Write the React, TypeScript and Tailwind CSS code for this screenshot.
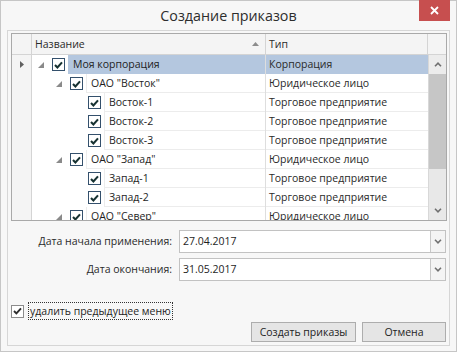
import React from "react";

type Row = { level: number; name: string; type: string; selected?: boolean };

const rows: Row[] = [
  { level: 1, name: "Моя корпорация", type: "Корпорация", selected: true },
  { level: 2, name: 'ОАО "Восток"', type: "Юридическое лицо" },
  { level: 3, name: "Восток-1", type: "Торговое предприятие" },
  { level: 3, name: "Восток-2", type: "Торговое предприятие" },
  { level: 3, name: "Восток-3", type: "Торговое предприятие" },
  { level: 2, name: 'ОАО "Запад"', type: "Юридическое лицо" },
  { level: 3, name: "Запад-1", type: "Торговое предприятие" },
  { level: 3, name: "Запад-2", type: "Торговое предприятие" },
  { level: 2, name: 'ОАО "Север"', type: "Юридическое лицо" },
];

// tree checkbox, dark slate border with a heavy tick
function TreeCheck() {
  return (
    <div className="w-[13px] h-[13px] border border-[#34506c] bg-white flex items-center justify-center">
      <svg width="9" height="8" viewBox="0 0 9 8">
        <path d="M1 4 L3.4 6.4 L8 1.4" fill="none" stroke="#173232" strokeWidth="2.1" />
      </svg>
    </div>
  );
}

function Expanded() {
  return (
    <svg width="6" height="6" viewBox="0 0 6 6">
      <path d="M6 0 L6 6 L0 6 Z" fill="#8a8a8a" />
    </svg>
  );
}

function Chevron({ up }: { up?: boolean }) {
  return (
    <svg width="8" height="5" viewBox="0 0 8 5">
      <path d={up ? "M1 4.2 L4 1.2 L7 4.2" : "M1 0.8 L4 3.8 L7 0.8"} fill="none" stroke="#707070" strokeWidth="1.6" />
    </svg>
  );
}

function DateField({ label, value }: { label: string; value: string }) {
  return (
    <div className="flex items-center">
      <div className="w-[164px] text-right text-[#2a2a2a]">{label}</div>
      <div className="ml-[7px] w-[267px] h-[23px] border border-[#c2c2c2] bg-white flex">
        <div className="flex-1 pl-[3px] flex items-center text-[#1e1e1e]">{value}</div>
        <div className="w-[15px] border-l border-[#c8c8c8] bg-[#f4f4f4] flex items-center justify-center">
          <Chevron />
        </div>
      </div>
    </div>
  );
}

export default function App() {
  return (
    <div className="w-[457px] h-[352px] bg-[#f7f7f7] border border-[#c6c6c6] flex flex-col relative font-['Open_Sans',sans-serif] text-[10.5px] leading-none">
      {/* title bar */}
      <div className="h-[29px] flex items-center justify-center text-[14.3px] text-[#2d2d2d] pt-[1px]">
        Создание приказов
      </div>
      <div className="absolute top-[-1px] right-[6px] w-[31px] h-[21px] bg-[#c74f4f] flex items-center justify-center">
        <svg width="9" height="9" viewBox="0 0 9 9">
          <path d="M1 1 L8 8 M8 1 L1 8" stroke="white" strokeWidth="1.8" />
        </svg>
      </div>

      {/* content panel */}
      <div className="ml-[6px] mr-[6px] mb-[5px] h-[316px] border border-[#d6d6d6] flex flex-col">
        {/* grid */}
        <div className="mt-[2px] ml-[3px] mr-[2px] h-[188px] border border-[#a9a9a9] bg-white flex flex-col overflow-hidden">
          <div className="h-[21px] flex bg-[#f4f4f4] border-b border-[#d4d4d4] text-[#2a2a2a]">
            <div className="w-[20px] border-r border-[#d4d4d4]" />
            <div className="w-[234px] border-r border-[#d4d4d4] pl-[3px] pr-[6px] flex items-center justify-between">
              <span>Название</span>
              <svg width="7" height="4" viewBox="0 0 7 4">
                <path d="M0 4 L3.5 0 L7 4 Z" fill="#8c8c8c" />
              </svg>
            </div>
            <div className="w-[162px] border-r border-[#d4d4d4] pl-[3px] flex items-center">Тип</div>
            <div className="w-[18px]" />
          </div>
          <div className="flex-1 flex overflow-hidden">
            <div className="w-[20px] bg-[#f4f4f4] border-r border-[#d4d4d4] flex flex-col">
              <div className="h-[19px] flex items-center justify-center">
                <svg width="4" height="7" viewBox="0 0 4 7">
                  <path d="M0 0 L4 3.5 L0 7 Z" fill="#606060" />
                </svg>
              </div>
            </div>
            <div className="w-[396px] flex flex-col">
              {rows.map((r) => (
                <div key={r.name} className="h-[19px] shrink-0 flex">
                  <div className="w-[234px] flex border-r border-[#dedede]">
                    <div style={{ width: 6 + 18 * (r.level - 1) }} />
                    <div className="w-[14px] flex items-center">{r.level < 3 && <Expanded />}</div>
                    <div className="w-[13px] flex items-center">
                      <TreeCheck />
                    </div>
                    <div
                      className={`ml-[3px] flex-1 pl-[4px] flex items-center border-l border-b ${
                        r.selected ? "bg-[#b4c7df] border-[#b4c7df]" : "border-[#ececec]"
                      } text-[#1e1e1e]`}
                    >
                      {r.name}
                    </div>
                  </div>
                  <div
                    className={`w-[162px] pl-[3px] flex items-center border-b ${
                      r.selected ? "bg-[#b4c7df] border-[#b4c7df]" : "border-[#ececec]"
                    } text-[#2a2a2a]`}
                  >
                    {r.type}
                  </div>
                </div>
              ))}
            </div>
            <div className="w-[18px] flex flex-col border-l border-[#d8d8d8]">
              <div className="h-[19px] bg-[#ececec] flex items-center justify-center">
                <Chevron up />
              </div>
              <div className="h-[95px] bg-[#c6c6c6]" />
              <div className="flex-1 bg-[#e8e8e8] flex flex-col justify-end">
                <div className="h-[19px] flex items-center justify-center">
                  <Chevron />
                </div>
              </div>
            </div>
          </div>
        </div>

        {/* dates */}
        <div className="mt-[9px] flex flex-col gap-[5px]">
          <DateField label="Дата начала применения:" value="27.04.2017" />
          <DateField label="Дата окончания:" value="31.05.2017" />
        </div>

        {/* option */}
        <div className="mt-[21px] ml-[3px] flex items-center h-[18px]">
          <div className="w-[13px] h-[13px] border border-[#8c8c8c] bg-white flex items-center justify-center">
            <svg width="9" height="8" viewBox="0 0 9 8">
              <path d="M1 4 L3.4 6.4 L8 1.4" fill="none" stroke="#2e2e2e" strokeWidth="1.9" />
            </svg>
          </div>
          <div className="ml-[4px] h-[18px] px-[1px] border border-dotted border-[#333] flex items-center text-[#1e1e1e]">
            удалить предыдущее меню
          </div>
        </div>

        {/* buttons */}
        <div className="mt-[2px] mr-[3px] flex justify-end gap-[6px]">
          <button className="w-[105px] h-[20px] bg-[#e5e5e5] border border-[#adadad] text-[#1e1e1e]">
            Создать приказы
          </button>
          <button className="w-[84px] h-[20px] bg-[#e5e5e5] border border-[#adadad] text-[#1e1e1e]">
            Отмена
          </button>
        </div>
      </div>
    </div>
  );
}
